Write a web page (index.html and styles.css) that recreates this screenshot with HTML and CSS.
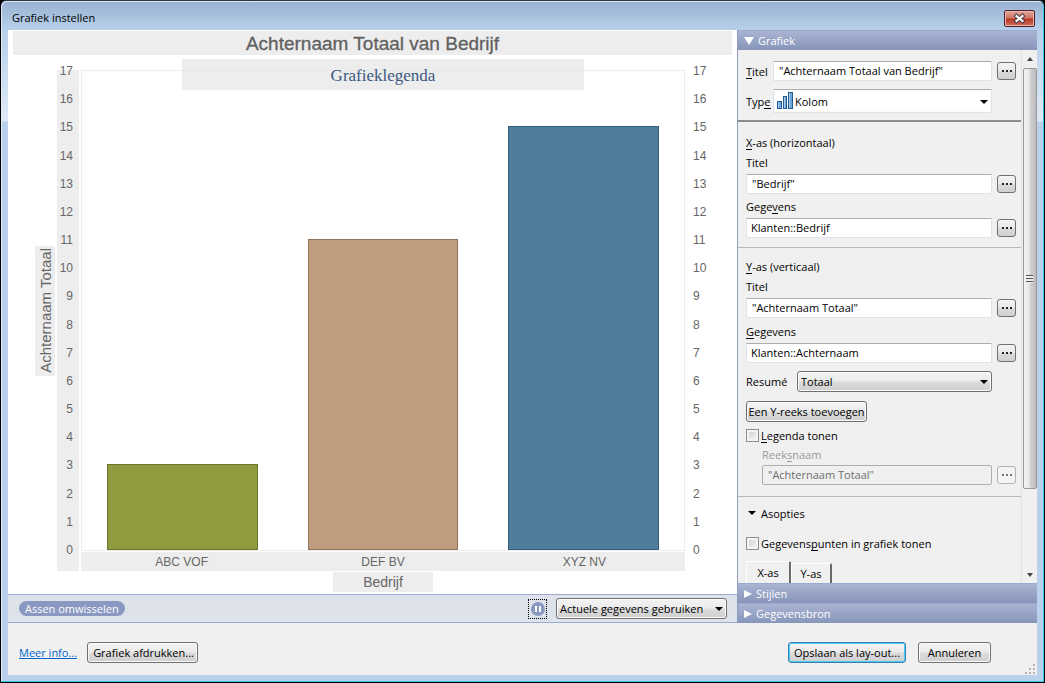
FILE: index.html
```html
<!DOCTYPE html>
<html lang="nl">
<head>
<meta charset="utf-8">
<title>Grafiek instellen</title>
<link rel="stylesheet" href="styles.css">
</head>
<body>
<div class="window">
  <header class="titlebar">
    <h1 class="titlebar-text">Grafiek instellen</h1>
    <button class="close" aria-label="Sluiten">
      <svg width="13" height="11" viewBox="0 0 13 11"><path d="M3.500 3 9.500 8M9.500 3 3.500 8" stroke="#4b3a45" stroke-width="4.200" stroke-linecap="square"/><path d="M3.500 3 9.500 8M9.500 3 3.500 8" stroke="#fff" stroke-width="2.200" stroke-linecap="square"/></svg>
    </button>
  </header>
  <div class="client">
    <main class="main">
      <section class="preview">
        <div class="chart">
          <h2 class="chart-title">Achternaam Totaal van Bedrijf</h2>
          <div class="chart-grid">
            <div class="y-title"><span>Achternaam Totaal</span></div>
            <div class="y-axis"><div class="ticks"><span>17</span><span>16</span><span>15</span><span>14</span><span>13</span><span>12</span><span>11</span><span>10</span><span>9</span><span>8</span><span>7</span><span>6</span><span>5</span><span>4</span><span>3</span><span>2</span><span>1</span><span>0</span></div></div>
            <div class="plot">
              <div class="cell"><div class="bar green" style="height:18%"></div></div>
              <div class="cell"><div class="bar tan" style="height:65%"></div></div>
              <div class="cell"><div class="bar blue" style="height:88.5%"></div></div>
              <div class="legend">Grafieklegenda</div>
            </div>
            <div class="y-axis-right"><div class="ticks"><span>17</span><span>16</span><span>15</span><span>14</span><span>13</span><span>12</span><span>11</span><span>10</span><span>9</span><span>8</span><span>7</span><span>6</span><span>5</span><span>4</span><span>3</span><span>2</span><span>1</span><span>0</span></div></div>
            <div class="x-axis"><span>ABC VOF</span><span>DEF BV</span><span>XYZ NV</span></div>
            <div class="x-title">Bedrijf</div>
          </div>
        </div>
        <div class="toolbar">
          <button class="pill">Assen omwisselen</button>
          <button class="pause" aria-label="Pauzeren">
            <svg width="14" height="14" viewBox="0 0 14 14"><circle cx="7" cy="7" r="7" fill="#8b99c2"/><path d="M4 4h2v6H4zM8 4h2v6H8z" fill="#fff"/></svg>
          </button>
          <span class="select-wrap data-select"><select class="select" aria-label="Gegevens"><option>Actuele gegevens gebruiken</option></select></span>
        </div>
      </section>
      <aside class="panel">
        <button class="group"><span class="tri-down"></span>Grafiek</button>
        <div class="scroller">
          <form class="form">
            <div class="section first">
              <div class="row"><label class="side-label" for="titel"><u>T</u>itel</label><input class="field quoted" id="titel" value='"Achternaam Totaal van Bedrijf"'><button type="button" class="more" aria-label="Titel opgeven"><i></i><i></i><i></i></button></div>
              <div class="row type"><label class="side-label" for="type">Typ<u>e</u></label><span class="select-wrap flat"><svg class="type-icon" width="17" height="18" viewBox="0 0 17 18"><path d="M0 10h5v8H0zM6 5h4v13H6zM11 1h5v17h-5z" fill="#235a91"/><path d="M1 11h3v6H1zM7 6h2v11H7zM12 2h3v15h-3z" fill="#6fa6da"/><path d="M1 11h1v6H1zM7 6h1v11H7zM12 2h1v15h-1z" fill="#a9cdf0"/></svg><select class="select" id="type"><option>Kolom</option></select></span></div>
            </div>
            <div class="section x">
              <div class="label"><u>X</u>-as (horizontaal)</div>
              <label class="label" for="xt">Titel</label>
              <div class="row"><input class="field quoted" id="xt" value='"Bedrijf"'><button type="button" class="more" aria-label="X-titel opgeven"><i></i><i></i><i></i></button></div>
              <label class="label spaced" for="xg">Gege<u>v</u>ens</label>
              <div class="row"><input class="field" id="xg" value="Klanten::Bedrijf"><button type="button" class="more" aria-label="X-gegevens opgeven"><i></i><i></i><i></i></button></div>
            </div>
            <div class="section y">
              <div class="label"><u>Y</u>-as (verticaal)</div>
              <label class="label" for="yt">Titel</label>
              <div class="row"><input class="field quoted" id="yt" value='"Achternaam Totaal"'><button type="button" class="more" aria-label="Y-titel opgeven"><i></i><i></i><i></i></button></div>
              <label class="label spaced" for="yg"><u>G</u>egevens</label>
              <div class="row"><input class="field" id="yg" value="Klanten::Achternaam"><button type="button" class="more" aria-label="Y-gegevens opgeven"><i></i><i></i><i></i></button></div>
              <div class="row resume"><label for="res">Resumé</label><span class="select-wrap"><select class="select" id="res"><option>Totaal</option></select></span></div>
              <button type="button" class="btn add">Een Y-reeks toevoegen</button>
              <label class="check"><input type="checkbox"><span><u>L</u>egenda tonen</span></label>
              <div class="series">
                <label class="label" for="rn">Reek<u>s</u>naam</label>
                <div class="row"><input class="field quoted" id="rn" value='"Achternaam Totaal"' disabled><button type="button" class="more" aria-label="Reeksnaam opgeven" disabled><i></i><i></i><i></i></button></div>
              </div>
            </div>
            <div class="section last">
              <button type="button" class="disclose"><span class="tri-small"></span>Asopties</button>
              <label class="check"><input type="checkbox"><span>Gegevens<u>p</u>unten in grafiek tonen</span></label>
              <div class="tabs"><button type="button" class="tab active">X-as</button><button type="button" class="tab">Y-as</button></div>
            </div>
          </form>
          <div class="scrollbar"><span class="arrow up"></span><div class="thumb"><span class="grip"></span></div><span class="arrow down"></span></div>
        </div>
        <button class="group"><span class="tri-right"></span>Stijlen</button>
        <button class="group"><span class="tri-right"></span>Gegevensbron</button>
      </aside>
    </main>
    <footer class="footer">
      <a class="link" href="#">Meer info...</a>
      <button class="btn print">Grafiek afdrukken...</button>
      <span class="spacer"></span>
      <button class="btn default">Opslaan als lay-out...</button>
      <button class="btn cancel">Annuleren</button>
      <svg class="resize" width="10" height="10" viewBox="0 0 10 10" fill="#b4b4b4"><path d="M8 0h2v2H8zM4 4h2v2H4zM8 4h2v2H8zM0 8h2v2H0zM4 8h2v2H4zM8 8h2v2H8z"/></svg>
    </footer>
  </div>
</div>
</body>
</html>
```
FILE: styles.css
```css
* { box-sizing: border-box; }
body { margin: 0; background: #000; }
body, button, input, select { font-family: "Open Sans", "Noto Sans", sans-serif; font-size: 11px; color: #000; }
button, h1, h2 { margin: 0; font-weight: normal; }
button { padding: 0; border: 0; white-space: nowrap; }
u { text-decoration: none; border-bottom: 1px solid currentColor; display: inline-block; line-height: 12px; }

.window { height: 100vh; min-height: 683px; display: flex; flex-direction: column; padding: 0 7px 7px 6px; border: 1px solid #000; border-top-color: #2c3542; border-radius: 6px 6px 0 0; box-shadow: inset -1px -1px #35c5e8, inset 1px 1px #dce9f6; background: linear-gradient(#98b2d0 0, #b7d0ea 29px, #dfeaf6 120px, #b9d1ea 121px); }
.titlebar { display: flex; justify-content: space-between; height: 29px; flex: none; padding: 0 2px 0 5px; }
.titlebar-text { font-size: 11px; line-height: 34px; }
.close { width: 31px; height: 17px; margin-top: 9px; display: flex; align-items: center; justify-content: center; border: 1px solid #541f27; border-radius: 2px; background: linear-gradient(#e3a49a, #cf7667 48%, #b8341f 52%, #d1705a); box-shadow: inset 0 0 0 1px #e7b5ab; }
.client { flex: 1; min-height: 0; display: flex; flex-direction: column; margin-left: 1px; background: #f0f0f0; }
.main { flex: 1; min-height: 0; display: flex; }
.preview { flex: 1; min-width: 0; display: flex; flex-direction: column; }

.chart { flex: 1; min-height: 0; display: flex; flex-direction: column; gap: 15px; padding: 1px 5px 2px; background: #fff; color: #666; font-family: "Liberation Sans", Arial, sans-serif; }
.chart-title { flex: none; height: 24px; line-height: 26px; font-size: 19px; text-align: center; background: #ededed; color: #606060; -webkit-text-stroke: 0.3px #606060; }
.chart-grid { flex: 1; min-height: 0; display: grid; grid-template-columns: 20px 22px 1fr 45px; grid-template-rows: 1fr 19px 20px; column-gap: 2px; row-gap: 1px; padding-left: 22px; }
.y-title { grid-row: 1; align-self: center; height: 130px; display: flex; align-items: center; justify-content: center; background: #ededed; font-size: 15px; }
.y-title span { writing-mode: vertical-rl; transform: rotate(180deg); white-space: nowrap; }
.y-axis { grid-column: 2; grid-row: 1 / 3; background: #ededed; padding: 1px 6px 21px 0; text-align: right; }
.y-axis-right { grid-column: 4; grid-row: 1; padding: 1px 0 1px 6px; }
.ticks { height: 100%; display: flex; flex-direction: column; justify-content: space-between; font-size: 12px; }
.ticks span { height: 0; line-height: 0; }
.plot { position: relative; grid-column: 3; grid-row: 1; display: grid; grid-template-columns: repeat(3, 1fr); border: 1px solid #ededed; }
.cell { display: flex; align-items: flex-end; justify-content: center; }
.bar { width: 75%; border: 1px solid; }
.green { background: #909b3f; border-color: #6b7428; }
.tan { background: #be9c7d; border-color: #90735a; }
.blue { background: #4f7e9c; border-color: #355e78; }
.legend { position: absolute; top: -12px; left: 100px; right: 100px; height: 31px; line-height: 34px; text-align: center; background: rgba(228, 228, 228, 0.66); color: #3a5882; font-family: "Liberation Serif", "Times New Roman", serif; font-size: 17px; }
.x-axis { grid-column: 3; grid-row: 2; display: grid; grid-template-columns: repeat(3, 1fr); text-align: center; background: #ededed; font-size: 12px; line-height: 20px; }
.x-title { grid-column: 3; grid-row: 3; justify-self: center; width: 100px; background: #ededed; text-align: center; font-size: 14px; line-height: 20px; }

.toolbar { flex: none; height: 29px; display: flex; align-items: center; padding: 0 10px 0 11px; background: #dde2eb; border: solid #9dadd0; border-width: 1px 0; }
.pill { height: 15px; line-height: 15px; padding: 0 6px; margin-right: auto; border-radius: 8px; background: #8b99c2; color: #fff; }
.pause { width: 19px; height: 20px; display: flex; align-items: center; justify-content: center; margin-right: 9px; border: 1px dotted #000; background: none; }
.data-select { width: 171px; }
.select-wrap { position: relative; display: flex; height: 21px; }
.select-wrap::after { content: ""; position: absolute; right: 4px; top: 9px; border: 4px solid transparent; border-top-color: #000; border-bottom: 0; pointer-events: none; }
.select { appearance: none; width: 100%; margin: 0; padding: 0 16px 0 3px; border: 1px solid #707070; border-radius: 3px; background: linear-gradient(#f3f3f3, #ebebeb 48%, #dcdcdc 52%, #cfcfcf); box-shadow: inset 0 0 0 1px #fafafa; }

.panel { flex: none; width: 300px; display: flex; flex-direction: column; border-left: 1px solid #8e9dc0; }
.group { flex: none; height: 20px; display: flex; align-items: center; gap: 4px; padding-left: 6px; background: linear-gradient(#aab4d3, #8695b9); border-top: 1px solid #9aa9ce; color: #fff; }
.tri-down { border: 5px solid transparent; border-top: 8px solid #fff; border-bottom: 0; }
.tri-right { border: 4px solid transparent; border-left: 8px solid #fff; border-right: 0; }
.scroller { flex: 1; min-height: 0; display: flex; overflow: hidden; }
.form { flex: 1; min-width: 0; display: flex; flex-direction: column; }
.section { flex: none; display: flex; flex-direction: column; padding: 0 5px 0 8px; border-bottom: 1px solid #b8b8b8; }
.first { gap: 8px; padding-top: 11px; padding-bottom: 7px; border-bottom: 2px solid #8c8c8c; }
.x { padding-top: 11px; padding-bottom: 9px; }
.y { padding-top: 9px; padding-bottom: 11px; }
.last { padding-top: 6px; border: 0; }
.row { display: flex; align-items: center; gap: 5px; }
.side-label { width: 22px; white-space: nowrap; }
.label { height: 21px; line-height: 20px; }
.spaced { margin-top: 3px; }
.y .spaced { margin-top: 4px; }
.x > div.label, .y > div.label { height: 20px; }
.field { flex: 1; min-width: 0; height: 20px; margin: 0; padding: 0 4px 1px; border: 1px solid #e2e3ea; border-top-color: #abadb3; border-radius: 1px; background: #fff; }
.quoted { padding-left: 5px; }
.field:disabled { background: #f0f0f0; border-color: #afafaf; border-radius: 2px; color: #6d6d6d; }
.more { width: 19px; height: 18px; flex: none; display: flex; align-items: center; justify-content: center; gap: 2px; border: 1px solid #707070; border-radius: 3px; background: linear-gradient(#f4f4f4, #e9e9e9 48%, #dadada 52%, #d0d0d0); }
.more i { width: 2px; height: 2px; background: #222; }
.more:disabled { border-color: #adb2b5; background: #f4f4f4; }
.more:disabled i { background: #777; }
.flat { flex: 1; height: 24px; margin-right: 24px; }
.flat::after { top: 11px; }
.flat .select { padding-left: 21px; border: 1px solid #e2e3ea; border-top-color: #abadb3; border-radius: 1px; background: #fff; }
.type-icon { position: absolute; left: 4px; top: 2px; }
.resume { margin-top: 8px; justify-content: space-between; padding-right: 24px; }
.resume .select-wrap { width: 195px; }
.btn { height: 21px; padding: 0 5px; border: 1px solid #707070; border-radius: 3px; background: linear-gradient(#f3f3f3, #ebebeb 48%, #dcdcdc 52%, #cfcfcf); box-shadow: inset 0 0 0 1px #fafafa; }
.add { align-self: flex-start; width: 121px; margin-top: 9px; padding: 0; }
.check { display: flex; align-items: center; gap: 2px; height: 20px; margin-top: 3px; }
.check input { appearance: none; width: 13px; height: 13px; margin: 0; border: 1px solid #8e8f8f; background: linear-gradient(135deg, #cbcfd5, #f6f6f6); box-shadow: inset 0 0 0 2px #f4f4f4; }
.series { padding-left: 16px; display: flex; flex-direction: column; color: #9a9a9a; }
.series .label { height: 20px; line-height: 19px; }
.disclose { align-self: flex-start; height: 20px; display: flex; align-items: center; gap: 5px; padding-left: 2px; background: none; }
.tri-small { border: 4px solid transparent; border-top-color: #000; border-bottom: 0; }
.last .check { margin-top: 10px; }
.tabs { display: flex; align-items: flex-end; margin-top: 8px; }
.tab { height: 20px; width: 41px; border: solid #fff; border-width: 1px 2px 0 1px; border-right-color: #696969; border-radius: 2px 2px 0 0; background: #f0f0f0; }
.tab.active { height: 22px; width: 45px; }
.scrollbar { flex: none; width: 16px; display: flex; flex-direction: column; align-items: center; border-left: 1px solid #e3e3e3; background: #f0f0f0; }
.arrow { border: 3px solid transparent; margin: 7px 0; }
.up { border-bottom: 4px solid #444; border-top: 0; }
.down { border-top: 4px solid #444; border-bottom: 0; margin: auto 0 6px; }
.thumb { width: 14px; height: 79%; display: flex; align-items: center; justify-content: center; border: 1px solid #979797; border-radius: 2px; background: linear-gradient(90deg, #f5f5f5, #e6e6e6 45%, #cfcfd1 55%, #bcbcc0); }
.grip { width: 7px; height: 8px; background: repeating-linear-gradient(#555 0 1px, #eee 1px 3px); }

.footer { position: relative; flex: none; height: 52px; display: flex; align-items: center; padding: 7px 46px 0 11px; }
.link { color: #0066cc; margin-right: 10px; }
.spacer { flex: 1; }
.print { width: 111px; }
.default { width: 118px; margin-right: 12px; border-color: #3c7fb1; box-shadow: inset 0 0 0 1px #42cdf0; }
.cancel { width: 73px; }
.resize { position: absolute; right: 2px; bottom: 1px; }
```
